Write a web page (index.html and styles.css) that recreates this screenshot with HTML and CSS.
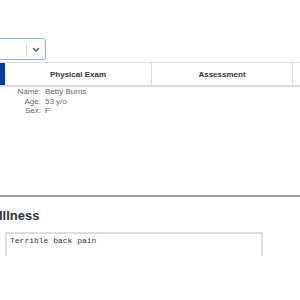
FILE: index.html
```html
<!DOCTYPE html>
<html lang="en">
<head>
  <meta charset="UTF-8">
  <title>Patient Chart</title>
  <link rel="stylesheet" href="styles.css">
</head>
<body>
  <div class="toolbar">
    <div class="select-box">
      <span class="select-value"></span>
      <span class="select-divider"></span>
      <span class="select-arrow">
        <svg width="8" height="5" viewBox="0 0 8 5"><path d="M1 1 L4 4 L7 1" fill="none" stroke="#555" stroke-width="1.4"/></svg>
      </span>
    </div>
  </div>

  <div class="tabs">
    <div class="tab active"></div>
    <div class="tab">Physical Exam</div>
    <div class="tab">Assessment</div>
    <div class="tab"></div>
  </div>

  <div class="patient">
    <div class="patient-row"><span class="label">Name:</span><span>Betty Burns</span></div>
    <div class="patient-row"><span class="label">Age:</span><span>53 y/o</span></div>
    <div class="patient-row"><span class="label">Sex:</span><span>F</span></div>
  </div>

  <hr class="divider">

  <h2 class="section-title">Illness</h2>
  <textarea class="notes">Terrible back pain</textarea>
</body>
</html>
```

FILE: styles.css
```css
body {
  margin: 0;
  padding: 0;
  height: 300px;
  overflow: hidden;
  font-family: "Liberation Sans", Arial, sans-serif;
  color: #333;
  background-color: #fff;
}
.toolbar {
  padding-top: 38px;
  height: 22px;
}
.select-box {
  display: flex;
  align-items: center;
  width: 46px;
  height: 22px;
  box-sizing: border-box;
  border: 1px solid #8fb6e0;
  border-left: none;
  border-radius: 0 3px 3px 0;
}
.select-value {
  flex: 1;
}
.select-divider {
  width: 1px;
  height: 12px;
  background-color: #ddd;
}
.select-arrow {
  width: 18px;
  display: flex;
  justify-content: center;
}
.tabs {
  display: flex;
  margin-top: 2px;
  height: 22px;
  overflow: hidden;
  border-top: 1px solid #ddd;
  border-bottom: 2px solid #ddd;
}
.tab {
  flex: 0 0 140px;
  display: flex;
  align-items: center;
  justify-content: center;
  border-right: 1px solid #ddd;
  font-size: 8px;
  font-weight: bold;
  color: #333;
}
.tab.active {
  flex: 0 0 5px;
  background-color: #0a3a99;
  border-right: none;
}
.tab:nth-child(2) {
  flex-basis: 146px;
}
.patient {
  font-size: 8px;
  color: #666;
}
.patient-row {
  display: flex;
  line-height: 9.5px;
}
.patient-row .label {
  width: 41px;
  text-align: right;
  margin-right: 4px;
}
.divider {
  margin: 79px 0 0;
  border: none;
  border-top: 2px solid #999;
}
.section-title {
  margin: 11px 0 0 -1px;
  font-size: 13px;
  font-weight: bold;
  color: #333;
}
.notes {
  display: block;
  margin: 9px 0 0 5px;
  width: 258px;
  height: 24px;
  box-sizing: border-box;
  padding: 2px 3px;
  border: 2px solid #ddd;
  border-bottom: none;
  font-family: "Liberation Mono", "DejaVu Sans Mono", monospace;
  font-size: 8px;
  color: #333;
  resize: none;
  outline: none;
}
```
